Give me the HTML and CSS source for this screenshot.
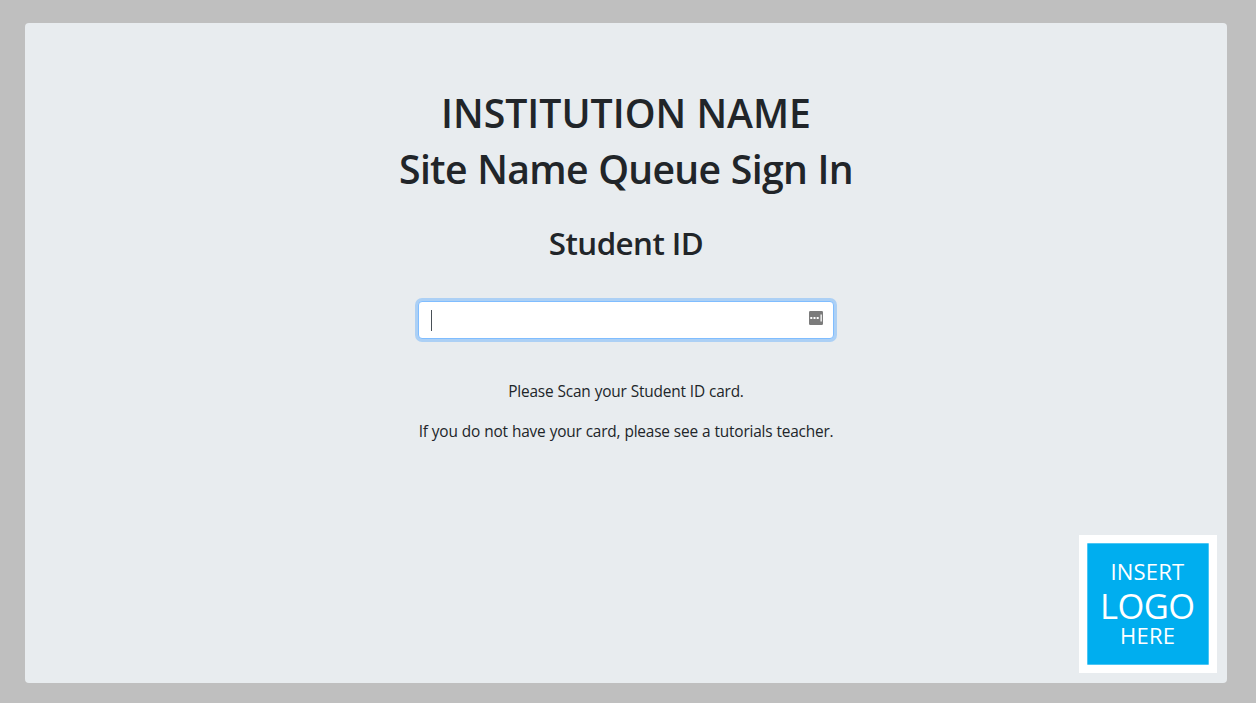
FILE: index.html
```
<!DOCTYPE html>
<html lang="en">
<head>
<meta charset="utf-8">
<title>Queue Sign In</title>
<link rel="stylesheet" href="styles.css">
</head>
<body>
<main class="panel">
  <h1 class="title">INSTITUTION NAME</h1>
  <h1 class="title site">Site Name Queue Sign In</h1>
  <h2 class="label">Student ID</h2>
  <div class="field">
    <span class="caret"></span>
    <svg class="key" width="14" height="14" viewBox="0 0 14 14"><rect width="14" height="14" rx="1.2" fill="#7b7b7b"/><path d="M1.300 6h2v2h-2zM4.500 6h2v2h-2zM7.700 6h2v2h-2zM11.500 3.500h1.300v7h-1.300z" fill="#fff"/></svg>
  </div>
  <p class="text scan">Please Scan your Student ID card.</p>
  <p class="text help">If you do not have your card, please see a tutorials teacher.</p>
  <div class="logo">
    <svg width="138" height="138" viewBox="0 0 138 138"><rect width="138" height="138" fill="#fff"/><rect x="8.300" y="8.300" width="121.400" height="121.400" fill="#00aeef"/>
      <g class="logo-text"><text x="31.500" y="45.300" font-size="22" textLength="73.500">INSERT</text><text x="21" y="83.500" font-size="34.500" textLength="95">LOGO</text><text x="41" y="108.500" font-size="22" textLength="55">HERE</text></g></svg>
  </div>
</main>
</body>
</html>
```
FILE: styles.css
```
* { box-sizing: border-box; }
body { margin: 0; padding: 23px 29px 20px 25px; height: 703px; background: #bfbfbf; color: #212529; font-family: "Open Sans", "Noto Sans", sans-serif; overflow: hidden; }
.panel { height: 660px; background: #e8ecef; border-radius: 4px; padding-top: 66px; display: flex; flex-direction: column; align-items: center; }
.title { margin: 0 0 8px; font-size: 39.2px; line-height: 48px; font-weight: 600; white-space: nowrap; }
.site { letter-spacing: -0.7px; word-spacing: 0.9px; }
.label { margin: 23px 0 0; font-size: 31.3px; line-height: 38px; font-weight: 600; letter-spacing: -0.55px; white-space: nowrap; }
.field { margin-top: 39px; width: 416px; height: 38px; flex: none; background: #fff; border: 1px solid #80bdff; border-radius: 4px; box-shadow: 0 0 0 3px #acd0f5; display: flex; align-items: center; justify-content: space-between; padding: 0 10px 0 12px; }
.caret { width: 1px; height: 21px; background: #495057; }
.key { margin-top: -4px; }
.text { margin: 0; font-size: 15.4px; line-height: 24px; letter-spacing: -0.2px; word-spacing: 0.35px; white-space: nowrap; }
.scan { margin-top: 41px; }
.help { margin-top: 16px; }
.logo { align-self: flex-end; margin: auto 10px 10px 0; height: 138px; }
.logo-text { fill: #fff; font-family: "Open Sans", sans-serif; }
```
